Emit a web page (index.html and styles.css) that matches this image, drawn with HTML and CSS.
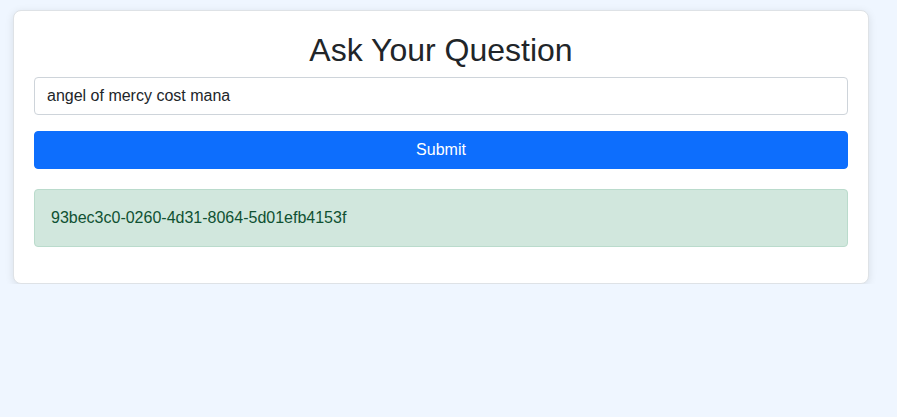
FILE: index.html
```html
<!DOCTYPE html>
<html lang="en">
<head>
<meta charset="utf-8">
<title>Ask Your Question</title>
<link rel="stylesheet" href="styles.css">
</head>
<body>
<div class="page">
  <div class="card">
    <h1 class="title">Ask Your Question</h1>
    <form class="ask-form">
      <input class="field" type="text" value="angel of mercy cost mana">
      <button class="submit" type="button">Submit</button>
    </form>
    <div class="alert">93bec3c0-0260-4d31-8064-5d01efb4153f</div>
  </div>
</div>
</body>
</html>
```
FILE: styles.css
```css
html, body {
  margin: 0;
  padding: 0;
}
body {
  background: #eff6ff;
  font-family: "Liberation Sans", Arial, sans-serif;
  color: #212529;
  font-size: 16px;
  line-height: 1.5;
}
.page {
  padding: 10px 0 0 13px;
}
.card {
  box-sizing: border-box;
  width: 856px;
  background: #fff;
  border: 1px solid #dee2e6;
  border-radius: 8px;
  padding: 20px 20px 20px;
  box-shadow: 0 2px 8px rgba(0, 0, 0, 0.1);
}
.title {
  margin: 0 0 8px;
  font-size: 32px;
  font-weight: 400;
  line-height: 1.2;
  text-align: center;
}
.ask-form {
  display: flex;
  flex-direction: column;
  gap: 16px;
  margin: 0 0 20px;
}
.field {
  box-sizing: border-box;
  width: 100%;
  height: 38px;
  padding: 6px 12px;
  font: inherit;
  color: #212529;
  border: 1px solid #ced4da;
  border-radius: 4px;
  background: #fff;
}
.submit {
  box-sizing: border-box;
  width: 100%;
  height: 38px;
  font: inherit;
  color: #fff;
  background: #0d6efd;
  border: 1px solid #0d6efd;
  border-radius: 4px;
}
.alert {
  padding: 16px;
  margin-bottom: 16px;
  background: #d1e7dd;
  border: 1px solid #badbcc;
  border-radius: 4px;
  color: #0f5132;
}
```
